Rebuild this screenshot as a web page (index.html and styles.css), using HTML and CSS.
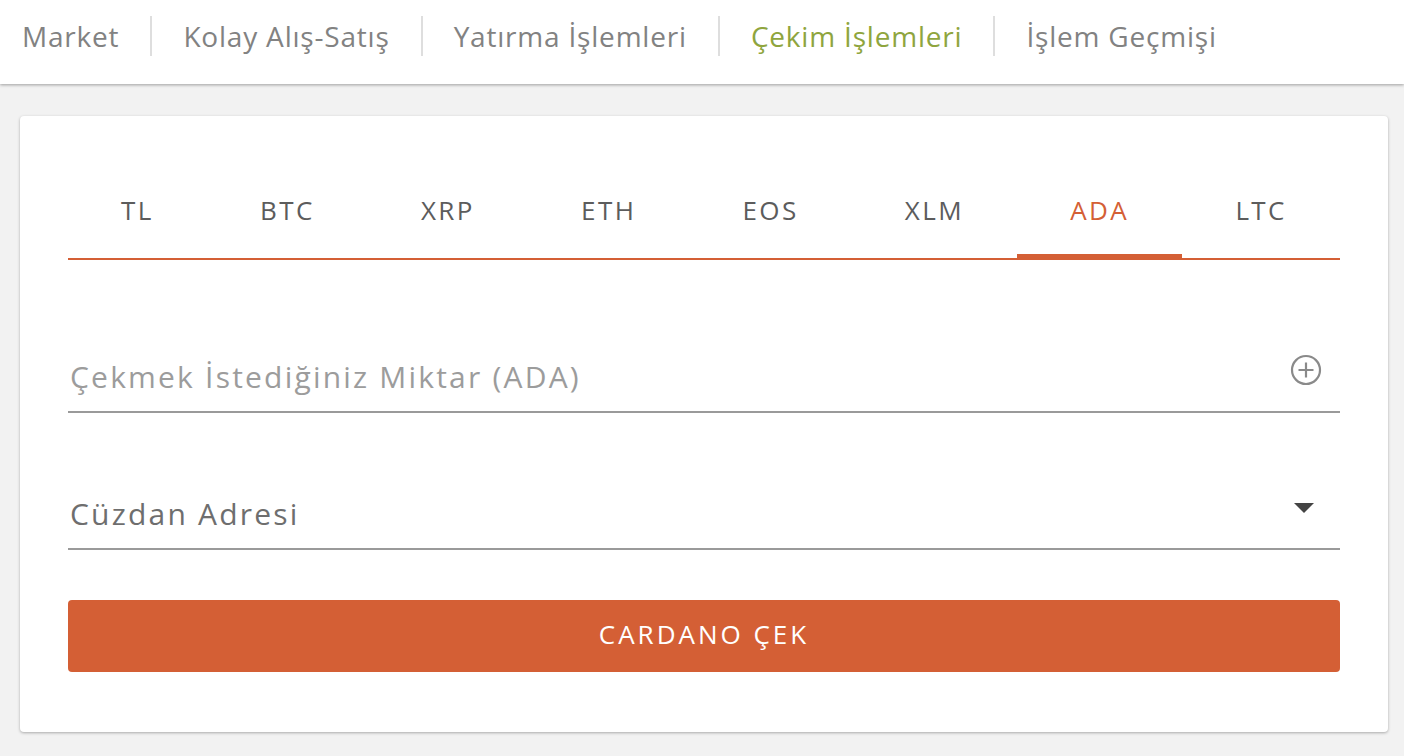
FILE: index.html
```html
<!DOCTYPE html>
<html lang="tr">
<head>
  <meta charset="UTF-8">
  <meta name="viewport" content="width=device-width, initial-scale=1.0">
  <title>Çekim İşlemleri</title>
  <link rel="stylesheet" href="styles.css">
</head>
<body>
  <nav class="topnav">
    <a href="#">Market</a>
    <a href="#">Kolay Alış-Satış</a>
    <a href="#">Yatırma İşlemleri</a>
    <a href="#" class="active">Çekim İşlemleri</a>
    <a href="#">İşlem Geçmişi</a>
  </nav>

  <main class="page">
    <section class="card">
      <div class="tabs">
        <div class="tab">TL</div>
        <div class="tab">BTC</div>
        <div class="tab">XRP</div>
        <div class="tab">ETH</div>
        <div class="tab">EOS</div>
        <div class="tab">XLM</div>
        <div class="tab active">ADA</div>
        <div class="tab">LTC</div>
      </div>

      <div class="field amount">
        <input type="text" placeholder="Çekmek İstediğiniz Miktar (ADA)">
        <svg class="plus" width="32" height="32" viewBox="0 0 32 32">
          <circle cx="16" cy="16" r="14" fill="none" stroke="#8a8a8a" stroke-width="2.2"/>
          <path d="M16 8.5v15M8.5 16h15" stroke="#8a8a8a" stroke-width="2.2"/>
        </svg>
      </div>

      <div class="field wallet">
        <select>
          <option>Cüzdan Adresi</option>
        </select>
        <svg class="caret" width="20" height="10" viewBox="0 0 20 10">
          <path d="M0 0h20L10 10z" fill="#444"/>
        </svg>
      </div>

      <button class="submit">CARDANO ÇEK</button>
    </section>
  </main>
</body>
</html>
```

FILE: styles.css
```css
* { box-sizing: border-box; }
body {
  margin: 0;
  background: #f2f2f2;
  font-family: 'Open Sans', 'Noto Sans', sans-serif;
  color: #555;
}

/* top navigation */
.topnav {
  display: flex;
  align-items: flex-start;
  height: 84px;
  padding: 16px 0 0 22px;
  background: #fff;
  box-shadow: 0 1px 3px rgba(0,0,0,0.35);
}
.topnav a {
  padding: 0 31px;
  border-left: 2px solid #dedede;
  line-height: 40px;
  font-size: 28px;
  letter-spacing: 0.8px;
  color: #828282;
  text-decoration: none;
}
.topnav a:first-child { padding-left: 0; border-left: none; }
.topnav a.active { color: #8fa53e; }

.page { padding: 32px 16px 24px 20px; }

.card {
  background: #fff;
  border-radius: 4px;
  box-shadow: 0 1px 3px rgba(0,0,0,0.3);
  padding: 48px 48px 60px;
}

/* currency tabs */
.tabs {
  display: flex;
  border-bottom: 2px solid #d45f35;
}
.tab {
  flex: 1 1 auto;
  padding: 0 16px;
  height: 94px;
  line-height: 92px;
  text-align: center;
  font-size: 26px;
  letter-spacing: 2.4px;
  color: #5c5c5c;
  cursor: pointer;
}
.tab.active {
  color: #d45f35;
  box-shadow: inset 0 -4px 0 #d45f35;
}

/* form fields */
.field {
  position: relative;
  border-bottom: 2px solid #9a9a9a;
}
.field.amount { margin-top: 81px; }
.field.wallet { margin-top: 65px; }
.field input,
.field select {
  display: block;
  width: 100%;
  height: 70px;
  padding: 0 60px 0 2px;
  border: none;
  outline: none;
  background: transparent;
  font-family: inherit;
  font-size: 30px;
  letter-spacing: 2.2px;
  color: #6e6e6e;
  appearance: none;
  -webkit-appearance: none;
}
.field input::placeholder { color: #9c9c9c; }
.field .plus {
  position: absolute;
  right: 18px;
  top: 13px;
}
.field .caret {
  position: absolute;
  right: 26px;
  top: 25px;
  pointer-events: none;
}

.submit {
  display: block;
  width: 100%;
  height: 72px;
  margin-top: 50px;
  padding: 0 0 5px;
  border: none;
  border-radius: 4px;
  background: #d45f35;
  color: #fff;
  font-family: inherit;
  font-size: 26px;
  letter-spacing: 3px;
  cursor: pointer;
}
```
